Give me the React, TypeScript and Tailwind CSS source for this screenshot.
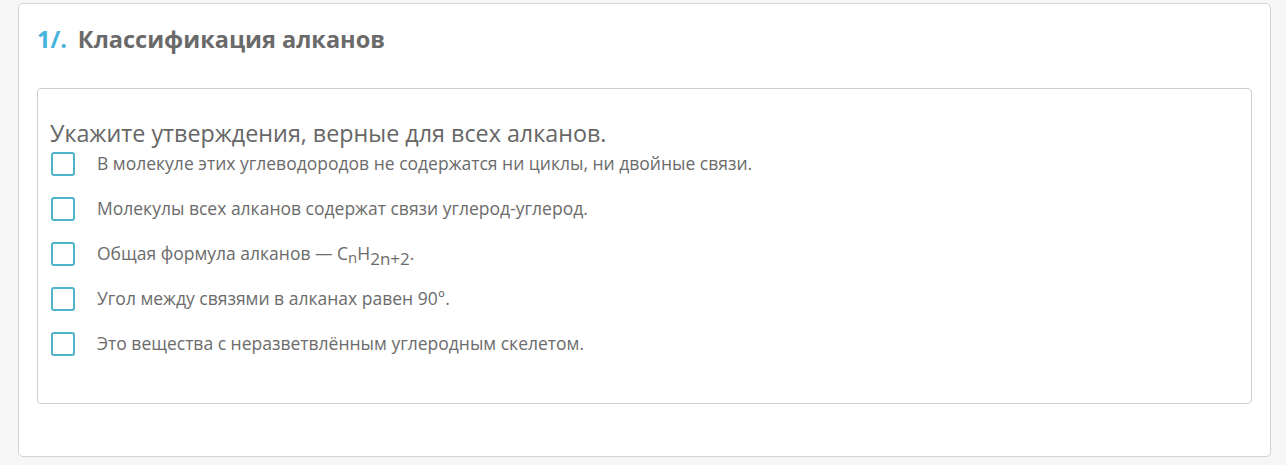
const options: React.ReactNode[] = [
  'В молекуле этих углеводородов не содержатся ни циклы, ни двойные связи.',
  'Молекулы всех алканов содержат связи углерод-углерод.',
  <>
    Общая формула алканов — C<sub className="text-[15px] relative top-[3px] align-baseline">n</sub>H
    <sub className="text-[17px] relative top-[5px] align-baseline">2n+2</sub>.
  </>,
  'Угол между связями в алканах равен 90°.',
  'Это вещества с неразветвлённым углеродным скелетом.',
];

export default function App() {
  return (
    <div className="min-h-[465px] bg-[#f6f6f6] pt-[3px] px-[15px] pb-[8px] font-['Open_Sans',sans-serif]">
      <div className="bg-white border border-[#d3d3d3] rounded-[5px] px-[18px] pt-[19px] pb-[52px] ml-[3px]">
        {/* заголовок */}
        <h2 className="text-[23.5px] leading-[32px] font-bold text-[#6a6a6a] flex gap-[11px]">
          <span className="text-[#45b4dd]">1/.</span>
          <span>Классификация алканов</span>
        </h2>

        {/* вопрос */}
        <div className="mt-[33px] border border-[#d0d0d0] rounded-[4px] pl-[12px] pt-[29px] pb-[47px]">
          <p className="text-[23.3px] leading-[30px] text-[#666]">Укажите утверждения, верные для всех алканов.</p>
          <div className="mt-[4px] flex flex-col gap-[21px]">
            {options.map((o, i) => (
              <label key={i} className="flex items-center h-[24px] ml-[1px] cursor-pointer">
                <span className="w-[24px] h-[24px] shrink-0 border-2 border-[#4fb4c9] rounded-[3px] bg-white" />
                <span className="ml-[22px] text-[17.5px] leading-[24px] text-[#6b6b6b] -mt-[2px]">{o}</span>
              </label>
            ))}
          </div>
        </div>
      </div>
    </div>
  );
}
